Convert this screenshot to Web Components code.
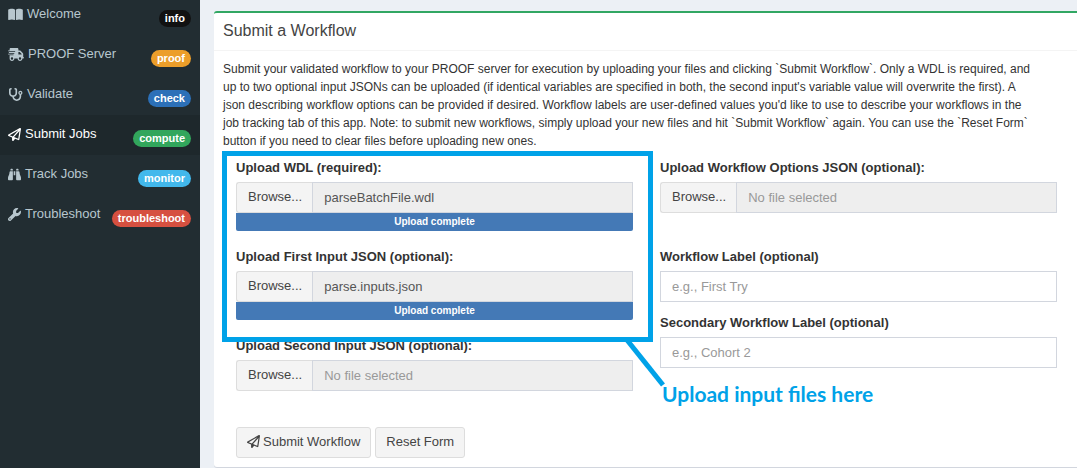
<!DOCTYPE html>
<html lang="en">
<head>
<meta charset="utf-8">
<title>PROOF - Submit a Workflow</title>
<style>
  body { margin: 0; background: #ecf0f5; color: #333; font: 13px/18px "Liberation Sans", Arial, sans-serif; }
</style>
</head>
<body>
<proof-app>
  <side-nav slot="nav">
    <nav-item icon="book" badge="info" color="#111111">Welcome</nav-item>
    <nav-item icon="truck" badge="proof" color="#ec9e2a">PROOF Server</nav-item>
    <nav-item icon="steth" badge="check" color="#2c70b8">Validate</nav-item>
    <nav-item icon="plane" badge="compute" color="#32a65c" active>Submit Jobs</nav-item>
    <nav-item icon="binoculars" badge="monitor" color="#42b8ec">Track Jobs</nav-item>
    <nav-item icon="wrench" badge="troubleshoot" color="#d65040">Troubleshoot</nav-item>
  </side-nav>
  <content-box heading="Submit a Workflow">
    <span slot="intro">Submit your validated workflow to your PROOF server for execution by uploading your files and clicking `Submit Workflow`. Only a WDL is required, and up to two optional input JSONs can be uploaded (if identical variables are specified in both, the second input's variable value will overwrite the first). A json describing workflow options can be provided if desired. Workflow labels are user-defined values you'd like to use to describe your workflows in the job tracking tab of this app. Note: to submit new workflows, simply upload your new files and hit `Submit Workflow` again. You can use the `Reset Form` button if you need to clear files before uploading new ones.</span>
    <form-column>
      <callout-frame note="Upload input files here">
        <file-field label="Upload WDL (required):" file="parseBatchFile.wdl"></file-field>
        <file-field label="Upload First Input JSON (optional):" file="parse.inputs.json"></file-field>
      </callout-frame>
      <file-field label="Upload Second Input JSON (optional):"></file-field>
    </form-column>
    <form-column>
      <file-field label="Upload Workflow Options JSON (optional):"></file-field>
      <text-field label="Workflow Label (optional)" placeholder="e.g., First Try"></text-field>
      <text-field label="Secondary Workflow Label (optional)" placeholder="e.g., Cohort 2"></text-field>
    </form-column>
    <action-button slot="actions" icon="plane">Submit Workflow</action-button>
    <action-button slot="actions">Reset Form</action-button>
  </content-box>
</proof-app>

<script>
const ICONS = {
  book: [576, "M249.6 471.5c10.8 3.8 22.4-4.1 22.4-15.5l0-377.4c0-4.2-1.6-8.4-5-11C247.4 52 202.4 32 144 32C87.5 32 35.1 48.6 9 59.9c-5.6 2.4-9 8-9 14L0 454.1c0 11.9 12.8 20.2 24.1 16.5C55.6 460.1 105.5 448 144 448c33.9 0 79 14 105.6 23.5zm76.8 0C353 462 398.1 448 432 448c38.5 0 88.4 12.1 119.9 22.6c11.3 3.8 24.1-4.6 24.1-16.5l0-380.3c0-6.1-3.4-11.6-9-14C540.9 48.6 488.5 32 432 32c-58.4 0-103.4 20-123 35.6c-3.3 2.6-5 6.8-5 11L304 456c0 11.4 11.7 19.3 22.4 15.5z"],
  truck: [640, "M112 0C85.5 0 64 21.5 64 48l0 48L16 96c-8.8 0-16 7.2-16 16s7.2 16 16 16l48 0 208 0c8.8 0 16 7.2 16 16s-7.2 16-16 16L64 160l-16 0c-8.8 0-16 7.2-16 16s7.2 16 16 16l16 0 176 0c8.8 0 16 7.2 16 16s-7.2 16-16 16L64 224l-48 0c-8.8 0-16 7.2-16 16s7.2 16 16 16l48 0 144 0c8.8 0 16 7.2 16 16s-7.2 16-16 16L64 288l0 128c0 53 43 96 96 96s96-43 96-96l128 0c0 53 43 96 96 96s96-43 96-96l32 0c17.7 0 32-14.3 32-32s-14.3-32-32-32l0-64 0-32 0-18.7c0-17-6.7-33.3-18.7-45.3L512 114.7c-12-12-28.3-18.7-45.3-18.7L416 96l0-48c0-26.5-21.5-48-48-48L112 0zM544 237.3l0 18.7-128 0 0-96 50.7 0L544 237.3zM160 368a48 48 0 1 1 0 96 48 48 0 1 1 0-96zm272 48a48 48 0 1 1 96 0 48 48 0 1 1 -96 0z"],
  steth: [576, "M142.4 21.9c5.6 16.8-3.5 34.9-20.2 40.5L96 71.1 96 192c0 53 43 96 96 96s96-43 96-96l0-120.9-26.1-8.7c-16.8-5.6-25.8-23.7-20.2-40.5s23.7-25.8 40.5-20.2l26.1 8.7C334.4 19.1 352 43.5 352 71.1L352 192c0 77.2-54.6 141.6-127.3 156.7C231 404.6 278.4 448 336 448c61.9 0 112-50.1 112-112l0-70.7c-28.3-12.3-48-40.5-48-73.3c0-44.2 35.8-80 80-80s80 35.8 80 80c0 32.8-19.7 61-48 73.3l0 70.7c0 97.2-78.8 176-176 176c-92.9 0-168.9-71.9-175.5-163.1C87.2 334.2 32 269.6 32 192L32 71.1c0-27.5 17.6-52 43.8-60.7l26.1-8.7c16.8-5.6 34.9 3.5 40.5 20.2zM480 224a32 32 0 1 0 0-64 32 32 0 1 0 0 64z"],
  plane: [512, "M16.1 260.2c-22.6 12.9-20.5 47.3 3.6 57.3L160 376l0 103.3c0 18.1 14.6 32.7 32.7 32.7c9.7 0 18.9-4.3 25.1-11.8l62-74.3 123.9 51.6c18.9 7.9 40.8-4.5 43.9-24.7l64-416c1.9-12.1-3.4-24.3-13.5-31.2s-23.3-7.5-34-1.4l-448 256zm52.1 25.5L409.7 90.6 190.1 336l1.2 1L68.2 285.7zM403.3 425.4L236.7 355.9 450.8 116.6 403.3 425.4z"],
  binoculars: [512, "M128 32l32 0c17.7 0 32 14.3 32 32l0 32L96 96l0-32c0-17.7 14.3-32 32-32zm64 96l0 320c0 17.7-14.3 32-32 32L32 480c-17.7 0-32-14.3-32-32l0-59.1c0-34.6 9.4-68.6 27.2-98.3C40.9 267.8 49.7 242.4 53 216L60.5 156c2-16 15.6-28 31.8-28l99.8 0zm227.8 0c16.1 0 29.8 12 31.8 28L459 216c3.3 26.4 12.1 51.8 25.8 74.6c17.8 29.7 27.2 63.7 27.2 98.3l0 59.1c0 17.7-14.3 32-32 32l-128 0c-17.7 0-32-14.3-32-32l0-320 99.8 0zM320 64c0-17.7 14.3-32 32-32l32 0c17.7 0 32 14.3 32 32l0 32-96 0 0-32zm-32 64l0 160-64 0 0-160 64 0z"],
  wrench: [512, "M352 320c88.4 0 160-71.6 160-160c0-15.3-2.2-30.1-6.2-44.2c-3.1-10.8-16.4-13.2-24.3-5.3l-76.8 76.8c-3 3-7.1 4.7-11.3 4.7L336 192c-8.8 0-16-7.2-16-16l0-57.4c0-4.2 1.7-8.3 4.7-11.3l76.8-76.8c7.9-7.9 5.4-21.2-5.3-24.3C382.1 2.2 367.3 0 352 0C263.6 0 192 71.6 192 160c0 19.1 3.4 37.5 9.5 54.5L19.9 396.1C7.2 408.8 0 426.1 0 444.1C0 481.6 30.4 512 67.9 512c18 0 35.3-7.2 48-19.9L297.5 310.5c17 6.2 35.4 9.5 54.5 9.5zM80 408a24 24 0 1 1 0 48 24 24 0 1 1 0-48z"]
};
const icon = name => {
  if (!name) return "";
  const [w, d] = ICONS[name];
  return `<svg aria-hidden="true" viewBox="0 0 ${w} 512" height="13" width="${Math.round(w * 13 / 512)}" fill="currentColor"><path d="${d}"/></svg>`;
};
const define = (tag, render, setup) => customElements.define(tag, class extends HTMLElement {
  connectedCallback() {
    if (this.shadowRoot) return;
    const root = this.attachShadow({ mode: "open" });
    root.innerHTML = render(this);
    if (setup) setup(root);
  }
});
const attr = (el, name) => el.getAttribute(name) || "";

define("proof-app", () => `
  <style>
    :host { display: grid; grid-template-columns: 200px minmax(0, 1fr); min-height: 100vh; }
    main { padding: 11px 0 0 14px; }
  </style>
  <slot name="nav"></slot>
  <main><slot></slot></main>`);

define("side-nav", () => `
  <style>
    :host { display: block; background: #222d32; overflow: hidden; }
    nav { display: flex; flex-direction: column; margin-top: -5px; }
  </style>
  <nav><slot></slot></nav>`);

define("nav-item", el => `
  <style>
    :host { display: block; color: #b8c7ce; }
    :host([active]) { color: #fff; background: #1e282c; }
    a { display: flex; align-items: flex-start; gap: 4px; height: 30px; padding: 10px 9px 0 8px; color: inherit; text-decoration: none; }
    svg { flex: none; margin-top: 3px; }
    .badge { margin: 5px 0 0 auto; padding: 0 6px; border-radius: 9px; color: #fff; font-size: 11px; font-weight: bold; line-height: 17px; background: ${attr(el, "color")}; }
  </style>
  <a href="#">${icon(el.getAttribute("icon"))}<span><slot></slot></span><span class="badge">${attr(el, "badge")}</span></a>`);

define("content-box", el => `
  <style>
    :host { display: block; background: #fff; border-top: 2px solid #31a763; border-radius: 3px 0 0 3px; box-shadow: 0 1px 0 #d2d6de; }
    h3 { margin: 0; padding: 8px 9px 9px; border-bottom: 1px solid #f4f4f4; color: #444; font-size: 16px; font-weight: normal; line-height: 20px; }
    .body { padding: 9px 7px 9px 9px; }
    p { margin: 0 0 9px; padding-right: 36px; font-size: 12px; }
    .columns { display: grid; grid-template-columns: 1fr 1fr; gap: 27px; padding: 0 13px; }
    .actions { display: flex; gap: 4px; padding: 1px 13px 0; }
  </style>
  <h3>${attr(el, "heading")}</h3>
  <div class="body">
    <p><slot name="intro"></slot></p>
    <div class="columns"><slot></slot></div>
    <div class="actions"><slot name="actions"></slot></div>
  </div>`);

define("form-column", () => `
  <style>:host { display: block; min-width: 0; }</style>
  <slot></slot>`);

const FIELD = `
  :host { display: block; }
  label { display: block; margin-bottom: 5px; font-weight: bold; }
  input { box-sizing: border-box; width: 100%; min-width: 0; height: 31px; margin: 0; padding: 0 11px; border: 1px solid #d2d6de; border-radius: 0; background: #fff; color: #555; font: inherit; }
  input::placeholder { color: #999; opacity: 1; }`;

define("file-field", el => `
  <style>${FIELD}
    :host { padding-bottom: 17px; }
    .group { display: flex; }
    button { flex: none; height: 31px; padding: 0 10px 2px 11px; border: 1px solid #ddd; border-right: 0; border-radius: 3px 0 0 3px; background: #f4f4f4; color: #444; font: inherit; }
    .group input[type=text] { flex: 1; background: #eee; }
    .progress { height: 18px; }
    .done { border-radius: 0 0 2px 2px; background: #4479b6; color: #fff; font-size: 10px; font-weight: bold; text-align: center; }
  </style>
  <label for="name">${attr(el, "label")}</label>
  <div class="group">
    <button type="button">Browse...</button>
    <input type="file" hidden>
    <input id="name" type="text" readonly placeholder="No file selected" value="${attr(el, "file")}">
  </div>
  <div class="progress${el.hasAttribute("file") ? " done" : ""}">${el.hasAttribute("file") ? "Upload complete" : ""}</div>`,
  root => {
    const picker = root.querySelector("input[type=file]");
    root.querySelector("button").addEventListener("click", () => picker.click());
    picker.addEventListener("change", () => {
      if (picker.files.length) root.getElementById("name").value = picker.files[0].name;
    });
  });

define("text-field", el => `
  <style>${FIELD}
    :host { padding-bottom: 12px; }
  </style>
  <label for="value">${attr(el, "label")}</label>
  <input id="value" type="text" placeholder="${attr(el, "placeholder")}">`);

define("action-button", el => `
  <style>
    :host { display: block; }
    button { display: flex; align-items: center; gap: 3px; height: 31px; padding: 0 10px 2px; border: 1px solid #ddd; border-radius: 3px; background: #f4f4f4; color: #444; font: inherit; }
  </style>
  <button type="button">${icon(el.getAttribute("icon"))}<span><slot></slot></span></button>`);

/* Highlights the fields inside it, with a leader line down to a note. */
define("callout-frame", el => `
  <style>
    :host { display: block; position: relative; color: inherit; }
    .frame { position: absolute; inset: -8px -20px -5px -14px; border: 5px solid #00a2e8; pointer-events: none; z-index: 1; }
    svg { position: absolute; top: calc(100% + 3px); right: -16px; overflow: visible; }
    .note { position: absolute; top: calc(100% + 45px); left: calc(100% + 14px); color: #00a2e8; font: bold 21px/24px Lato, sans-serif; white-space: nowrap; }
  </style>
  <slot></slot>
  <div class="frame">
    <svg width="40" height="46" aria-hidden="true"><path d="M3 0L39 45" stroke="#00a2e8" stroke-width="5"/></svg>
    <div class="note">${attr(el, "note")}</div>
  </div>`);
</script>
</body>
</html>
